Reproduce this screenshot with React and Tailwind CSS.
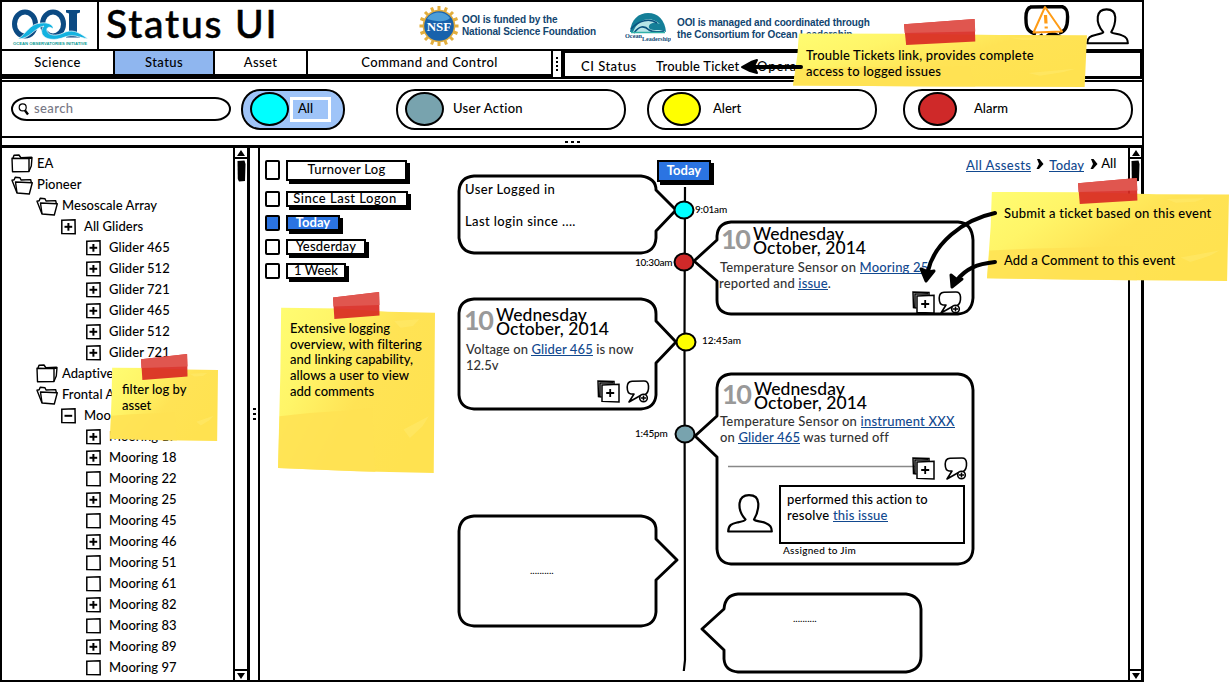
import React from "react";

const tree = [
  ["closed", 0, "EA"],
  ["open", 0, "Pioneer"],
  ["open", 1, "Mesoscale Array"],
  ["plus", 2, "All Gliders"],
  ["plus", 3, "Glider 465"],
  ["plus", 3, "Glider 512"],
  ["plus", 3, "Glider 721"],
  ["plus", 3, "Glider 465"],
  ["plus", 3, "Glider 512"],
  ["plus", 3, "Glider 721"],
  ["closed", 1, "Adaptive"],
  ["open", 1, "Frontal Array"],
  ["minus", 2, "Moorings"],
  ["plus", 3, "Mooring 17"],
  ["plus", 3, "Mooring 18"],
  ["box", 3, "Mooring 22"],
  ["plus", 3, "Mooring 25"],
  ["box", 3, "Mooring 45"],
  ["plus", 3, "Mooring 46"],
  ["box", 3, "Mooring 51"],
  ["box", 3, "Mooring 61"],
  ["plus", 3, "Mooring 82"],
  ["box", 3, "Mooring 83"],
  ["plus", 3, "Mooring 89"],
  ["box", 3, "Mooring 97"],
];

const indents = ["pl-[9px]", "pl-[34px]", "pl-[59px]", "pl-[84px]"];

function TreeIcon({ kind }) {
  if (kind === "closed" || kind === "open") {
    return (
      <svg className="w-[22px] h-[20px] shrink-0" viewBox="0 0 22 20" fill="none" stroke="#000" strokeWidth="1.4" strokeLinejoin="round">
        {kind === "closed" ? (
          <>
            <path d="M1 4.2L18 4.6L18 17.5L1.5 17.8Z" />
            <path d="M2 4L3 1.2L8 1L10 4M18 4.5L21 3.5L20.3 12L18 17.3M10 3.6L20.8 3.2" />
          </>
        ) : (
          <>
            <path d="M4.5 7L21.3 7.8L18.3 19L6 18Z" />
            <path d="M6 18L1 5.2L3.2 4.8L4.2 2.2L9 2.8L10 5L19.7 4.6L20.3 7.5" />
          </>
        )}
      </svg>
    );
  }
  return (
    <svg className="w-[15px] h-[16px] shrink-0" viewBox="0 0 15 16" fill="none" stroke="#000" strokeWidth="1.5">
      <path d="M.8 1.2L14 .8L14.2 14.8L.8 14.4Z" />
      {kind !== "box" && <path d="M3.5 7.8H11.2" strokeWidth="2" />}
      {kind === "plus" && <path d="M7.4 4V11.7" strokeWidth="2" />}
    </svg>
  );
}

function ScrollBar({ edge }) {
  return (
    <div className={`w-[14px] shrink-0 h-full flex flex-col justify-between items-center border-l-2 border-black bg-white ${edge}`}>
      <div className="w-full flex flex-col items-center">
        <div className="w-full h-[11px] border-b-2 border-black flex items-center justify-center">
          <svg className="w-[8px] h-[6px]" viewBox="0 0 8 6"><path d="M4 0L8 6H0Z" /></svg>
        </div>
        <svg className="w-[9px] h-[22px] mt-px" viewBox="0 0 9 22"><path d="M.5 1L7.5 .5L8.5 4L8 21L2 21.5L.8 19Z" /></svg>
      </div>
      <div className="w-full h-[11px] border-t-2 border-black flex items-center justify-center">
        <svg className="w-[8px] h-[6px]" viewBox="0 0 8 6"><path d="M4 6L8 0H0Z" /></svg>
      </div>
    </div>
  );
}

function UserIcon({ className }) {
  return (
    <svg className={className} viewBox="0 0 46 39" fill="none" stroke="#000" strokeWidth="2.2" strokeLinejoin="round">
      <path d="M1.2 37.5C1.5 31 5 29.5 10 28.5C15 27.5 18 27 18.5 25.5C13.5 20 12 14 12.6 9C13.5 3 17.5 1.2 22 1.2C27 1.2 31 3.5 31.3 9.5C31.5 15 30 20.5 27 25.5C28 27.5 34 27 38.5 29C43.5 31 44.6 33 44.8 37.5Z" />
    </svg>
  );
}

function Filter({ color, label, className, gap }) {
  return (
    <div className={`h-[41px] flex items-center rounded-[19px/20px] border-2 border-black pl-[7px] ${className}`}>
      <span className={`w-[39px] h-[34px] rounded-[50%] border-2 border-black shrink-0 ${color}`} />
      <span className={gap}>{label}</span>
    </div>
  );
}

function Note({ className, tape, children, w }) {
  return (
    <div className={`absolute ${className}`}>
      <svg className="absolute inset-0 w-full h-full" viewBox="0 0 100 100" preserveAspectRatio="none">
        <defs>
          <linearGradient id={`note-${w}`} x1="0" y1="0" x2="1" y2=".55">
            <stop offset="0" stopColor="#fffd72" />
            <stop offset=".3" stopColor="#fff568" />
            <stop offset=".62" stopColor="#ffe355" />
            <stop offset="1" stopColor="#ffe250" />
          </linearGradient>
        </defs>
        <path d="M2 1L40 1.5L70 3.5L100 4L99.2 100L50 99L0 97L1.5 40Z" fill={`url(#note-${w})`} />
        <path d="M1 66L20 64L45 62.5L60 61L62 99.2L40 98.5L0 97Z" fill="#ffe253" opacity=".85" />
        <path d="M74 9L90 8L86 12L78 13ZM80 74L96 66L92 72L84 79Z" fill="#ffe96b" opacity=".6" />
      </svg>
      <svg className={`absolute ${tape}`} viewBox="0 0 100 100" preserveAspectRatio="none">
        <path d="M0 20L98 0L99 87L3 100Z" fill="#d92b24" opacity=".93" />
        <path d="M0 20L98 0L99 48L1 54Z" fill="#e0564f" />
      </svg>
      <div className="relative">{children}</div>
    </div>
  );
}

function AddIcon() {
  return (
    <svg className="w-[23px] h-[23px]" viewBox="0 0 23 23" fill="none" stroke="#000" strokeWidth="1.5">
      <path d="M4.5 17L1.5 16.5L1 1L17 1.4V4M3 16V3H16" />
      <path d="M5 5L22 4.2V22L5 21.4Z" fill="#fff" />
      <path d="M13.2 9V17M9.2 13H17.2" strokeWidth="1.8" />
    </svg>
  );
}

function CommentIcon() {
  return (
    <svg className="w-[24px] h-[23px]" viewBox="0 0 24 23" fill="none" stroke="#000" strokeWidth="1.6" strokeLinejoin="round">
      <path d="M8 14L3 22L14.5 15.5L19 14.8C22 13 22.8 10.5 22.5 6C22.3 2.5 21 1 18 1L6 1.2C2 1.5 1.2 4 1.2 7C1.2 11 2.5 13.7 5 14Z" />
      <circle cx="17.5" cy="18" r="3.8" fill="#fff" />
      <path d="M15 18H20M17.5 15.5V20.5" strokeWidth="1.5" />
    </svg>
  );
}

function Link({ children }) {
  return <span className="text-[#12498f] border-b border-[#12498f] inline-block h-[15px] leading-[16px]">{children}</span>;
}

function DateHead() {
  return (
    <div className="flex">
      <span className="w-[30px] -ml-[2px] mr-[2px] text-[27px] leading-[28px] text-[#999] tracking-[-1.5px] font-bold">10</span>
      <div className="text-[17.5px] leading-[14px] text-black pt-[2px] tracking-[0.05px]">
        <div>Wednesday</div>
        <div>October, 2014</div>
      </div>
    </div>
  );
}

const checks = [
  { label: "Turnover Log", row: "h-[28px] mb-[3px]", btn: "w-[121px] h-[21px] tracking-[0.3px]", box: "h-[20px]" },
  { label: "Since Last Logon", row: "h-[24px]", btn: "w-[122px] h-[16px] tracking-[0.5px] pr-[4px]", box: "h-[16px]" },
  { label: "Today", row: "h-[24px]", btn: "w-[54px] h-[16px] bg-[#2b74e2] text-white font-bold", box: "h-[16px] bg-[#2b74e2]" },
  { label: "Yesderday", row: "h-[24px]", btn: "w-[80px] h-[16px] tracking-[0.2px]", box: "h-[16px]" },
  { label: "1 Week", row: "h-[24px]", btn: "w-[60px] h-[16px]", box: "h-[16px]" },
];

function Header() {
  return (
    <header className="h-[49px] flex border-b-2 border-black shrink-0">
      <div className="w-[97px] border-r-2 border-black shrink-0 flex justify-center pt-[7px]">
        <svg className="w-[78px] h-[39px]" viewBox="0 0 78 39">
          <g fill="none" stroke="#0b4a83">
            <ellipse cx="14" cy="15" rx="10.5" ry="12" strokeWidth="5" />
            <ellipse cx="42" cy="15" rx="10.5" ry="12" strokeWidth="5" />
          </g>
          <path d="M55 1H69V3.5L66 4.5V25L69 26V28.5H55V26L58 25V4.5L55 3.5Z" fill="#0b4a83" />
          <path d="M7 30C16 24 18 15 30 14C37 13 43 16 42 20C39 17 35 18 36 22C38 27 46 27 52 24C60 20 67 22 77 30C67 28 62 25 54 28C44 32 34 31 31 25C30 21 31 19 33 17C23 19 19 30 7 30Z" fill="#13b2e0" stroke="#fff" strokeWidth=".7" />
          <text x="2" y="36" textLength="74" lengthAdjust="spacingAndGlyphs" fontSize="4.2" fontWeight="900" fill="#0a9a93" fontFamily="Liberation Sans, sans-serif">OCEAN OBSERVATORIES INITIATIVE</text>
        </svg>
      </div>
      <div className="w-[320px] pl-[7px] text-[39px] leading-[43px] tracking-[1.8px] font-medium shrink-0 [-webkit-text-stroke:0.5px_#000]">Status UI</div>
      <div className="w-[206px] shrink-0 flex pt-[3px]">
        <svg className="w-[40px] h-[42px] mr-[3px]" viewBox="0 0 40 42">
          <g stroke="#e3ae3c" strokeWidth="3">
            <path d="M20 1V41M0.5 21H39.5M6 7L34 35M34 7L6 35M12.5 2.5L27.5 39.5M27.5 2.5L12.5 39.5M1.5 13.5L38.5 28.5M38.5 13.5L1.5 28.5" />
          </g>
          <circle cx="20" cy="21" r="16.3" fill="#e0ad40" />
          <circle cx="20" cy="21" r="14.8" fill="#1862ac" />
          <path d="M8 14C12 6 25 5 31 13C26 18 15 16 8 14Z" fill="#4c9ed8" />
          <text x="20" y="26" textAnchor="middle" fontSize="13" fontWeight="700" fill="#fff" fontFamily="Liberation Serif, serif">NSF</text>
        </svg>
        <div className="pt-[9px] text-[10px] leading-[12px] font-bold text-[#11456f] font-['Liberation_Sans',sans-serif] tracking-[-0.12px] whitespace-nowrap">
          <div>OOI is funded by the</div>
          <div>National Science Foundation</div>
        </div>
      </div>
      <div className="flex pt-[10px] w-[399px] shrink-0">
        <svg className="w-[46px] h-[32px] mr-[6px]" viewBox="0 0 46 32">
          <path d="M5 20C6 7 14 1 23 1C33 1 40 8 41 20Z" fill="#147f98" />
          <path d="M8 20C13 7 25 3 35 12C28 9 23 12 24 16C27 20 35 16 41 20Z" fill="#b7e4e6" />
          <path d="M6 17C14 8 25 6 32 11M9 21C14 14 19 13 24 18C28 21 34 20 39 19" fill="none" stroke="#0b5380" strokeWidth="1.6" />
          <path d="M6 20.5H40" stroke="#31b0a8" strokeWidth="1.4" />
          <text x="0" y="26" fontSize="6.5" fontWeight="700" fill="#114b78" textLength="17" lengthAdjust="spacingAndGlyphs" fontFamily="Liberation Serif, serif">Ocean</text>
          <text x="17" y="28.5" fontSize="7" fontWeight="700" fill="#114b78" textLength="29" lengthAdjust="spacingAndGlyphs" fontFamily="Liberation Serif, serif">Leadership</text>
        </svg>
        <div className="pt-[5px] text-[10px] leading-[11.5px] font-bold text-[#11456f] font-['Liberation_Sans',sans-serif] tracking-[-0.12px] whitespace-nowrap">
          <div>OOI is managed and coordinated through</div>
          <div>the Consortium for Ocean Leadership</div>
        </div>
      </div>
      <div className="flex pt-[3px]">
        <svg className="w-[46px] h-[34px] mr-[16px]" viewBox="0 0 46 34" fill="none">
          <path d="M6 2L38 1.5C43 3 44 7 43.5 14C43.5 23 40 27 35 28M12 29C4 27 2 23 2 15C1.5 7 3 3 7 2" stroke="#000" strokeWidth="3.4" />
          <path d="M14 33L19 30M23 32C26 28 31 28 37 33" stroke="#000" strokeWidth="4" />
          <path d="M21 2L9.5 27.5L38 26.5Z" stroke="#ff9c16" strokeWidth="2" fill="#fff" strokeLinejoin="round" />
          <path d="M21.5 10L22 18.5M22.2 21.5V23.5" stroke="#ff9c16" strokeWidth="3.2" />
        </svg>
        <UserIcon className="w-[43px] h-[39px] mt-[2px]" />
      </div>
    </header>
  );
}

function Nav() {
  const item = "h-full flex items-center justify-center border-black pt-px tracking-[0.4px]";
  return (
    <nav className="h-[29px] flex shrink-0">
      <div className="h-[28px] flex border-b-[5px] border-black shrink-0">
        <div className={`${item} w-[113px] border-r-2`}>Science</div>
        <div className={`${item} w-[100px] border-r-2 bg-[#8fb6ef]`}>Status</div>
        <div className={`${item} w-[93px] border-r-2`}>Asset</div>
        <div className={`${item} w-[245px] border-r-2`}>Command and Control</div>
      </div>
      <div className="w-[10px] h-[28px] flex flex-col items-center justify-center gap-[2px] border-r-2 border-b-2 border-black shrink-0">
        <span className="size-[2px] bg-black" /><span className="size-[2px] bg-black" /><span className="size-[2px] bg-black" /><span className="size-[2px] bg-black" />
      </div>
      <div className="flex-1 h-[28px] border-2 border-b-[3px] border-black flex items-center pl-[16px] pt-[4px] overflow-hidden">
        <span className="w-[75px] tracking-[0.5px]">CI Status</span>
        <span className="w-[101px] tracking-[0.2px]">Trouble Ticket</span>
        <span className="tracking-[0.9px]">Operations</span>
      </div>
    </nav>
  );
}

function Card({ className, children }) {
  return <div className={`absolute ${className}`}>{children}</div>;
}

function Timeline() {
  const time = "absolute text-[10px] leading-[12px] whitespace-nowrap";
  return (
    <div className="relative flex-1 overflow-hidden">
      <svg className="absolute inset-0 w-[867px] h-[532px]" viewBox="260 148 867 532" fill="none" stroke="#000" strokeWidth="2.9" strokeLinejoin="round">
        <path d="M685 187L684.5 340L684.7 480L685 660L683.8 671" strokeWidth="2.2" />
        <g fill="#fff">
          <path d="M474 176H641Q656 178 656 190L676 210L656 231V238Q655 252 641 253H474Q461 252 459 238V191Q460 177 474 176Z" />
          <path d="M731 222H958Q972 223 973 240V298Q972 313 958 314H731Q717 313 717 300V281L694 261L717 240V236Q718 223 731 222Z" />
          <path d="M474 299H641Q656 301 656 314V321L676 342L656 363V395Q655 408 641 409H474Q460 408 459 395V313Q460 300 474 299Z" />
          <path d="M731 374H958Q972 375 973 390V549Q972 563 958 564H731Q718 563 717 549V457L695 436L717 416V388Q718 375 731 374Z" />
          <path d="M474 516H641Q656 518 656 530V539L677 560L656 580V612Q655 625 641 626H474Q460 625 459 612V531Q460 517 474 516Z" />
          <path d="M738 594H906Q920 596 921 609V656Q921 670 906 672H738Q725 671 724 659V650L702 629L724 609Q725 595 738 594Z" />
        </g>
        <g strokeWidth="2">
          <ellipse cx="684" cy="210" rx="9.5" ry="8.5" fill="#0ff" />
          <ellipse cx="684" cy="262" rx="9.5" ry="8.5" fill="#cf2929" />
          <ellipse cx="686" cy="342" rx="9.5" ry="8.5" fill="#ff0" />
          <ellipse cx="685" cy="434" rx="9.5" ry="8.5" fill="#78a3ae" />
        </g>
        <path d="M728 466.5H915" stroke="#888" strokeWidth="1.5" />
      </svg>

      <div className="absolute left-[5px] top-[8px] flex flex-col">
        {checks.map((c) => (
          <div key={c.label} className={`flex items-center ${c.row}`}>
            <span className={`w-[15px] border-2 border-black rounded-[2px] mr-[6px] ${c.box}`} />
            <span className={`border-2 border-black flex items-center justify-center whitespace-nowrap shadow-[3px_3px_0_#000] ${c.btn}`}>{c.label}</span>
          </div>
        ))}
      </div>

      <div className="absolute left-[706px] top-[8px] h-[16px] flex items-center whitespace-nowrap">
        <span className="flex tracking-[0.4px]"><Link>All Assests</Link></span>
        <svg className="w-[8px] h-[10px] mx-[5px]" viewBox="0 0 8 10"><path d="M1 0L3.5 0L7.5 5L3 10L.5 10L3 5Z" /></svg>
        <span className="flex tracking-[0.2px]"><Link>Today</Link></span>
        <svg className="w-[8px] h-[10px] ml-[6px] mr-[3px]" viewBox="0 0 8 10"><path d="M1 0L3.5 0L7.5 5L3 10L.5 10L3 5Z" /></svg>
        <span>All</span>
      </div>

      <div className="absolute left-[397px] top-[12px] w-[54px] h-[22px] bg-[#2b74e2] border-2 border-black shadow-[3px_3px_0_#000] text-white font-bold flex items-center justify-center">Today</div>

      <span className={`${time} left-[435px] top-[55px] tracking-[-0.2px]`}>9:01am</span>
      <span className={`${time} left-[375px] top-[108px] tracking-[-0.25px]`}>10:30am</span>
      <span className={`${time} left-[442px] top-[186px]`}>12:45am</span>
      <span className={`${time} left-[375px] top-[279px] tracking-[-0.2px]`}>1:45pm</span>

      <Card className="left-[205px] top-[33px] w-[185px] leading-[16px]">
        <p className="tracking-[0.4px]">User Logged in</p>
        <p className="mt-4 tracking-[0.4px]">Last login since ....</p>
      </Card>

      <Card className="left-[463px] top-[77px] w-[246px] text-[#333]">
        <DateHead />
        <p className="leading-[16px] mt-[4px] -ml-[3px] whitespace-nowrap tracking-[0.18px]">Temperature Sensor on <Link>Mooring 25</Link></p>
        <p className="leading-[16px] -ml-[4px] tracking-[0.15px]">reported and <Link>issue</Link>.</p>
        <div className="flex justify-end gap-[3px] pr-[7px]"><AddIcon /><CommentIcon /></div>
      </Card>

      <Card className="left-[206px] top-[160px] w-[190px] text-[#333] -mt-[2px]">
        <DateHead />
        <p className="leading-[16px] mt-[5px] tracking-[0.1px]">Voltage on <Link>Glider 465</Link> is now</p>
        <p className="leading-[16px]">12.5v</p>
        <div className="flex justify-end gap-[6px] pr-[6px] mt-[7px]"><AddIcon /><CommentIcon /></div>
      </Card>

      <Card className="left-[464px] top-[232px] w-[246px] text-[#333]">
        <DateHead />
        <p className="leading-[16px] mt-[3px] -ml-[4px] whitespace-nowrap tracking-[0.22px]">Temperature Sensor on <Link>instrument XXX</Link></p>
        <p className="leading-[16px] -ml-[4px] tracking-[0.15px]">on <Link>Glider 465</Link> was turned off</p>
        <div className="flex justify-end gap-[9px] pr-[2px] mt-[12px]"><AddIcon /><CommentIcon /></div>
        <div className="flex items-start mt-[5px] ml-[3px] text-black">
          <UserIcon className="w-[46px] h-[39px] mt-[9px] mr-[6px]" />
          <div>
            <div className="w-[186px] h-[59px] border-2 border-black pl-[6px] pt-[4px] leading-[16px]">
              <p className="tracking-[0.1px]">performed this action to</p>
              <p className="tracking-[0.2px]">resolve <Link>this issue</Link></p>
            </div>
            <p className="text-[10px] leading-[12px] ml-[4px] tracking-[0.3px]">Assigned to Jim</p>
          </div>
        </div>
      </Card>

      <Card className="left-[270px] top-[414px] text-[10px] leading-[16px]">..........</Card>
      <Card className="left-[533px] top-[462px] text-[10px] leading-[16px]">..........</Card>
    </div>
  );
}

export default function App() {
  return (
    <div className="relative w-[1230px] h-[682px] overflow-hidden bg-white text-black text-[13px] font-medium font-[Lato,sans-serif]">
      <div className="w-[1144px] h-[682px] flex flex-col border-2 border-black">
        <Header />
        <Nav />
        <section className="h-[58px] shrink-0 border-t-2 border-b-2 border-black flex items-center pl-[9px]">
          <div className="w-[220px] h-[24px] rounded-[16px/12px] border-2 border-black flex items-center pl-[5px] text-[#777785] tracking-[0.4px]">
            <svg className="w-[11px] h-[13px] mr-[5px]" viewBox="0 0 11 13" fill="none" stroke="#000"><circle cx="4.7" cy="4.4" r="3.5" strokeWidth="1.2" /><path d="M7 7.5L10 11.5" strokeWidth="2.3" /></svg>
            search
          </div>
          <Filter label="All" color="bg-[#0ff]" className="w-[104px] ml-[10px] bg-[#9fc4f8]" gap="w-[41px] h-[25px] ml-px border-[3px] border-white flex items-center pl-[5px]" />
          <Filter label="User Action" color="bg-[#78a3ae]" className="w-[230px] ml-[51px]" gap="ml-[9px] tracking-[0.3px]" />
          <Filter label="Alert" color="bg-[#ff0]" className="w-[230px] ml-[21px] pl-[13px]" gap="ml-[12px]" />
          <Filter label="Alarm" color="bg-[#cf2929]" className="w-[230px] ml-[26px] pl-[13px]" gap="ml-[17px]" />
        </section>
        <div className="h-[7px] shrink-0 flex items-center justify-center gap-[3px]">
          <span className="w-[3px] h-[2px] bg-black" /><span className="w-[3px] h-[2px] bg-black" /><span className="w-[3px] h-[2px] bg-black" />
        </div>
        <main className="flex-1 min-h-0 flex border-t-[3px] border-black">
          <aside className="w-[248px] shrink-0 flex border-r-[3px] border-black">
            <div className="flex-1 pt-[5px] overflow-hidden">
              {tree.map(([kind, level, label], i) => (
                <div key={i} className={`h-[21px] flex items-center whitespace-nowrap tracking-[0.05px] ${indents[level]}`}>
                  <TreeIcon kind={kind} />
                  <span className={kind === "open" || kind === "closed" ? "ml-[4px]" : "ml-[8px]"}>{label}</span>
                </div>
              ))}
            </div>
            <ScrollBar edge="" />
          </aside>
          <div className="w-[10px] shrink-0 flex flex-col items-center justify-center gap-[3px] border-r-2 border-black">
            <span className="w-[3px] h-[2px] bg-black" /><span className="w-[3px] h-[2px] bg-black" /><span className="w-[3px] h-[2px] bg-black" />
          </div>
          <Timeline />
          <ScrollBar edge="border-r" />
        </main>
      </div>

      <Note w="tickets" className="left-[793px] top-[33px] w-[294px] h-[54px] pl-[13px] pt-[14px]" tape="left-[111px] top-[-14px] w-[72px] h-[26px]">
        <p className="leading-[16px] tracking-[0.17px] whitespace-nowrap">Trouble Tickets link, provides complete<br />access to logged issues</p>
      </Note>
      <Note w="filter" className="left-[110px] top-[367px] w-[108px] h-[74px] pl-[12px] pt-[14px]" tape="left-[31px] top-[-13px] w-[47px] h-[26px]">
        <p className="leading-[16px]">filter log by<br />asset</p>
      </Note>
      <Note w="logging" className="left-[278px] top-[306px] w-[157px] h-[167px] pl-[12px] pt-[15px]" tape="left-[55px] top-[-14px] w-[47px] h-[27px]">
        <p className="leading-[15.7px] tracking-[0.03px] whitespace-nowrap">Extensive logging<br />overview, with filtering<br />and linking capability,<br />allows a user to view<br />add comments</p>
      </Note>
      <Note w="events" className="left-[987px] top-[191px] w-[242px] h-[90px] pl-[17px] pt-[14px]" tape="left-[91px] top-[-13px] w-[60px] h-[26px]">
        <p className="leading-[16px] tracking-[0.23px] whitespace-nowrap">Submit a ticket based on this event</p>
        <p className="leading-[16px] tracking-[0.15px] whitespace-nowrap mt-[31px]">Add a Comment to this event</p>
      </Note>

      <svg className="absolute inset-0 w-[1230px] h-[682px] pointer-events-none" viewBox="0 0 1230 682" fill="none" stroke="#000" strokeWidth="4" strokeLinecap="round" strokeLinejoin="round">
        <path d="M801 67H748" />
        <path d="M742 67L751 62L757 60L754 66L757 73L750 71Z" fill="#000" strokeWidth="2" />
        <path d="M995 213C962 220 934 244 928 271" />
        <path d="M926 281L921 269L928 272L934 271Z" fill="#000" strokeWidth="3" />
        <path d="M995 262C976 264 966 269 957 280" />
        <path d="M952 287L951 275L956 279L962 279Z" fill="#000" strokeWidth="3" />
      </svg>
    </div>
  );
}
